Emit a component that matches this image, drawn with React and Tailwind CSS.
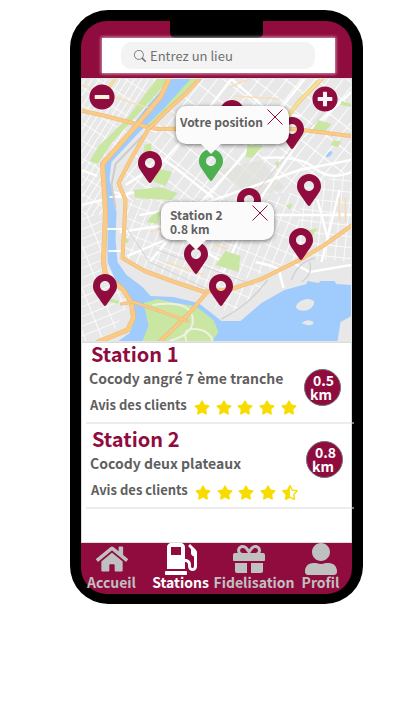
import { BsSearch } from "react-icons/bs";
import {
  FaGasPump,
  FaGift,
  FaHome,
  FaMapMarkerAlt,
  FaMinusCircle,
  FaPlusCircle,
  FaStar,
  FaStarHalfAlt,
  FaUserAlt,
} from "react-icons/fa";

const stations = [
  {
    name: "Station 1",
    place: "Cocody angré 7 ème tranche",
    distance: "0.5",
    stars: 5,
    row: "pl-[7px] pr-[10px]",
    badge: "mt-[26px]",
  },
  {
    name: "Station 2",
    place: "Cocody deux plateaux",
    distance: "0.8",
    stars: 4.5,
    row: "pl-2 pr-2 pt-1",
    badge: "mt-[13px]",
  },
];

const pins = [
  "left-[56px] top-[72px]",
  "left-[215px] top-[95px]",
  "left-[198px] top-[38px]",
  "left-[138px] top-[21px]",
  "left-[155px] top-[109px]",
  "left-[207px] top-[149px]",
  "left-[102px] top-[163px]",
  "left-[127px] top-[195px]",
  "left-[11px] top-[195px]",
];

const tabs = [
  { label: "Accueil", Icon: FaHome, icon: "", active: false },
  { label: "Stations", Icon: FaGasPump, icon: "", active: true },
  { label: "Fidelisation", Icon: FaGift, icon: "mr-[10px]", active: false },
  { label: "Profil", Icon: FaUserAlt, icon: "", active: false },
];

function Road({ d, width = 3, color = "#fbcb85", edge = "#e9b876" }) {
  return (
    <g fill="none" strokeLinejoin="round" strokeLinecap="round">
      <path d={d} stroke={edge} strokeWidth={width + 1} />
      <path d={d} stroke={color} strokeWidth={width} />
    </g>
  );
}

function CityMap() {
  return (
    <svg
      className="block h-full w-full"
      viewBox="82 79 270 262"
      preserveAspectRatio="xMidYMid slice"
      aria-hidden="true"
    >
      <defs>
        <pattern id="west" width="6" height="15" patternUnits="userSpaceOnUse" patternTransform="rotate(32)">
          <path d="M0 0V15M0 0H6" stroke="#fff" strokeWidth="1.7" />
        </pattern>
        <pattern id="mid" width="11" height="19" patternUnits="userSpaceOnUse" patternTransform="rotate(38)">
          <path d="M0 0V19M0 0H11" stroke="#fff" strokeWidth="1.8" />
        </pattern>
        <pattern id="midSouth" width="9" height="14" patternUnits="userSpaceOnUse" patternTransform="rotate(22)">
          <path d="M0 0V14M0 0H9" stroke="#fff" strokeWidth="1.7" />
        </pattern>
        <pattern id="east" width="9" height="11" patternUnits="userSpaceOnUse" patternTransform="rotate(6)">
          <path d="M0 0V11M0 0H9" stroke="#fff" strokeWidth="1.5" />
        </pattern>
        <pattern id="southWest" width="16" height="9" patternUnits="userSpaceOnUse" patternTransform="rotate(-22)">
          <path d="M0 0V9M0 0H16" stroke="#fff" strokeWidth="1.7" />
        </pattern>
      </defs>
      <rect x="82" y="79" width="270" height="262" fill="#e8e8e8" />
      <path d="M82 79H172L102 165 104 215H82Z" fill="url(#west)" />
      <path d="M82 215H104L104 262 130 300 110 341H82Z" fill="url(#southWest)" />
      <path d="M198 79H352V170L300 190 240 200 125 200 125 165Z" fill="url(#mid)" />
      <path d="M125 200H270L300 190V258L212 292 125 260Z" fill="url(#midSouth)" />
      <path d="M300 190 352 170V262L300 258Z" fill="url(#east)" />
      <path d="M222 291 262 280 266 286 234 314 212 306Z" fill="url(#midSouth)" />
      <path d="M220 170 262 160 285 188 250 200Z" fill="#dfdfda" opacity="0.7" />

      <g fill="none" stroke="#fff" strokeWidth="2.4">
        <path d="M82 170 98 176M82 205 152 188M150 150 176 168 214 198M126 185 165 160 200 120 232 79" />
        <path d="M140 215 200 205 300 170 352 160M150 262 190 215 240 160 305 79M218 285 250 215 300 140 352 92" />
        <path d="M262 158Q300 155 315 168T352 172M318 200 330 245M225 215H352M340 190 322 262" />
        <path d="M232 79 270 112 300 116M120 232 160 226 220 260M128 256 170 238" />
        <path d="M256 262Q285 268 280 273L284 288M292 262 310 272 352 265" />
      </g>
      <path d="M158 250 255 285M190 262 250 200 330 105M125 225 150 262 210 290" fill="none" stroke="#d5d5d5" />
      <path d="M222 319Q250 305 268 280M292 280Q298 262 316 258M302 282Q314 274 310 262" fill="none" stroke="#d2d2d2" strokeWidth="1.4" />

      <g fill="#c9e6a3">
        <path d="M157 79H170L150 102 112 143 98 164 90 161 100 145 112 134 130 115Z" />
        <path d="M188 79H198L176 103 150 130 146 126Z" />
        <path d="M157 168 173 172 166 186 150 180Z" />
        <path d="M134 190 160 187 178 193 172 200 136 198Z" />
        <path d="M145 145 152 143V156L144 154Z" />
        <path d="M153 215 162 210 158 224 147 222Z" />
        <path d="M248 145 264 146 252 158 246 157Z" />
        <path d="M319 120 332 124 326 131 312 131Z" />
        <path d="M276 112 287 107 286 118 278 122Z" />
        <path d="M226 251 241 256 239 272 216 265Z" />
        <path d="M342 101 352 104V107L341 105ZM334 140 342 142 338 147 331 145Z" />
        <path d="M275 163 280 161 278 167ZM286 206 293 203 291 210ZM309 230 318 228 313 236Z" />
        <path d="M109 298 120 301 118 304 108 301ZM124 238 130 239 128 243 121 241Z" />
      </g>

      <path
        d="M172 79H191L164 109 140 132 112 162 110 179 117 213 116 240 118 262 127 275 143 287 151 296 174 297 199 303 222 321H241L262 303 285 290 307 284 308 281 319 283 321 281H335L337 284 352 285V341H119L130 333 136 318 132 304 117 282 108 262 108 213 102 180 103 165 120 143 146 108Z"
        fill="#9fcbfd"
      />
      <path d="M144 303 158 299 176 303 196 306 214 320 219 332 213 341H143L149 326Z" fill="#c9e6a3" />
      <path d="M296 307Q298 301 307 299 317 299 314 305 309 313 299 310ZM302 323Q308 318 314 322 314 326 307 325ZM352 316 341 322 338 341H352Z" fill="#e8e8e8" />
      <path d="M326 157Q330 149 333 152 331 158 326 157Z" fill="#9fcbfd" />
      <path d="M153 305Q190 300 193 317T170 341M180 318 165 312M187 341Q182 328 196 329T213 341" fill="none" stroke="#eef0e4" strokeWidth="2" />
      <path d="M110 197H122M106 229H124M109 251H122M137 123 157 132M114 192 129 196" stroke="#fff" strokeWidth="2" />
      <path d="M144 135 116 164 112 185 116 208" fill="none" stroke="#cdcdcd" strokeWidth="2" />
      <path d="M82 85 130 102 153 109 146 116M230 87 250 79M234 96 280 99M216 245 228 249M165 262 205 275M150 232 180 224" fill="none" stroke="#f7dfba" strokeWidth="1.5" />

      <Road d="M116 78 98 104" width={2} color="#f8df9c" edge="#edd08a" />
      <Road d="M323 78 300 101 284 122" width={3} color="#f8df93" edge="#e7c777" />
      <Road d="M80 110 110 117 140 125 157 129 230 128 295 129 352 136" width={3} />
      <Road d="M170 78 161 97 133 130 103 164 106 212 104 262 106 275 124 290 132 303 134 318 128 330 98 342" width={4} />
      <Road d="M201 78 186 94 166 112 149 129 132 158 119 183 126 200 125 222 123 258 145 271 175 282 205 292 232 289 262 279 300 260 325 245 353 225" width={3} />
      <Road d="M206 294 190 313 160 342" />
      <Road d="M122 304 134 302 160 311 188 321" width={2} />
      <path d="M340 198V222M346 198V222" stroke="#f3dcc0" strokeWidth="2" />
    </svg>
  );
}

function Callout({ place, align, children }) {
  return (
    <div
      className={`absolute flex h-[38px] w-[113px] items-center rounded-[10px] bg-[#fbfbfb] text-xs leading-[14px] font-bold text-[#5f5f5f] shadow-[0_1px_4px_rgba(0,0,0,0.55)] ${place}`}
    >
      <div className={align}>{children}</div>
      <button type="button" aria-label="Fermer" className="absolute top-[3px] right-[6px]">
        <svg className="block h-4 w-4" viewBox="0 0 16 16" stroke="#900c3f" aria-hidden="true">
          <path d="M0.5 0.5 15.5 15.5M15.5 0.5 0.5 15.5" />
        </svg>
      </button>
      <svg className="absolute top-[37px] left-6 h-[11px] w-[22px]" viewBox="0 0 22 11" aria-hidden="true">
        <path d="M0 0H22L11 11Z" fill="#fbfbfb" />
      </svg>
    </div>
  );
}

function Rating({ value }) {
  return (
    <div role="img" aria-label={`${value} sur 5`} className="flex w-[103px] justify-between pt-1 text-[#f8dc00]">
      {[1, 2, 3, 4, 5].map((n) =>
        n <= value ? <FaStar key={n} className="h-[15px] w-4" /> : <FaStarHalfAlt key={n} className="h-[15px] w-4" />,
      )}
    </div>
  );
}

export default function App() {
  return (
    <main className="min-h-screen bg-white pt-[10px] pr-[49px] pl-[70px] font-['Noto_Sans_CJK_SC',sans-serif]">
      <div className="rounded-[38px] bg-black p-[11px] pb-[10px]">
        <header className="relative rounded-t-[26px] bg-[#900c3f] pt-[17px] pr-[17px] pb-[5px] pl-[21px]">
          <div className="absolute inset-x-[89px] top-0 h-[17px] rounded-b-[5px] bg-black" />
          <div className="relative bg-white py-1 pr-5 pl-[19px] shadow-[0_0_3px_1px_rgba(255,255,255,0.6)]">
            <label className="flex h-[27px] items-center gap-1 rounded-[10px] bg-[#f3f3f3] pl-[13px] text-[#707070]">
              <BsSearch className="h-3 w-3 shrink-0" aria-hidden="true" />
              <input
                type="search"
                aria-label="Entrez un lieu"
                placeholder="Entrez un lieu"
                className="w-full min-w-0 bg-transparent text-[13px] leading-5 outline-none placeholder:text-[#707070]"
              />
            </label>
          </div>
        </header>

        <section aria-label="Carte" className="relative h-[264px] border border-[#e4e4e4] bg-[#e8e8e8]">
          <CityMap />
          <button type="button" aria-label="Zoom arrière" className="absolute top-[5px] left-[7px] text-[#900c3f]">
            <span className="absolute inset-1 rounded-full bg-[#fdf3da]" />
            <FaMinusCircle className="relative h-[26px] w-[26px]" />
          </button>
          <button type="button" aria-label="Zoom avant" className="absolute top-[7px] right-[13px] text-[#900c3f]">
            <span className="absolute inset-1 rounded-full bg-[#f7f7f7]" />
            <FaPlusCircle className="relative h-[26px] w-[26px]" />
          </button>
          {pins.map((place) => (
            <FaMapMarkerAlt key={place} className={`absolute h-8 w-6 text-[#900c3f] ${place}`} />
          ))}
          <FaMapMarkerAlt className="absolute top-[70px] left-[117px] h-8 w-6 text-[#4caf50]" />
          <Callout place="left-[94px] top-[27px]" align="pl-1 pb-[6px]">
            Votre position
          </Callout>
          <Callout place="left-[79px] top-[123px]" align="pl-[9px] pt-[2px]">
            Station 2
            <br />
            0.8 km
          </Callout>
        </section>

        <section aria-label="Stations" className="border border-[#dcdcdc] bg-white pb-[33px]">
          {stations.map((station) => (
            <article key={station.name}>
              <div className={`flex items-start justify-between font-bold text-[#5f5f5f] ${station.row}`}>
                <div className="whitespace-nowrap">
                  <h2 className="pl-[2px] text-xl leading-[22px] text-[#900c3f]">{station.name}</h2>
                  <p className="text-sm leading-[26px]">{station.place}</p>
                  <div className="flex items-center gap-[7px] pt-[2px] pb-[5px] pl-px">
                    <span className="text-[13px] leading-6">Avis des clients</span>
                    <Rating value={station.stars} />
                  </div>
                </div>
                <div
                  className={`flex h-[37px] w-[37px] shrink-0 flex-col items-center justify-center rounded-full border border-[#707070] bg-[#900c3f] pb-px text-sm leading-[14px] text-white ${station.badge}`}
                >
                  <span className="pl-[2px]">{station.distance}</span>
                  <span className="pr-[3px]">km</span>
                </div>
              </div>
              <hr className="relative -mr-[3px] ml-1 border-t-2 border-[#dfdfdf]/55" />
            </article>
          ))}
        </section>

        <nav className="grid grid-cols-[61fr_77fr_70fr_63fr] rounded-b-[26px] bg-[#900c3f] text-sm leading-4 font-bold">
          {tabs.map(({ label, Icon, icon, active }) => (
            <a
              key={label}
              href="#"
              aria-current={active ? "page" : undefined}
              className={`flex min-w-0 flex-col items-center pb-1 ${active ? "text-white" : "text-[#c0c0c0]"}`}
            >
              <Icon className={`h-8 w-8 ${icon}`} aria-hidden="true" />
              <span className="-mt-px whitespace-nowrap">{label}</span>
            </a>
          ))}
        </nav>
      </div>
    </main>
  );
}
